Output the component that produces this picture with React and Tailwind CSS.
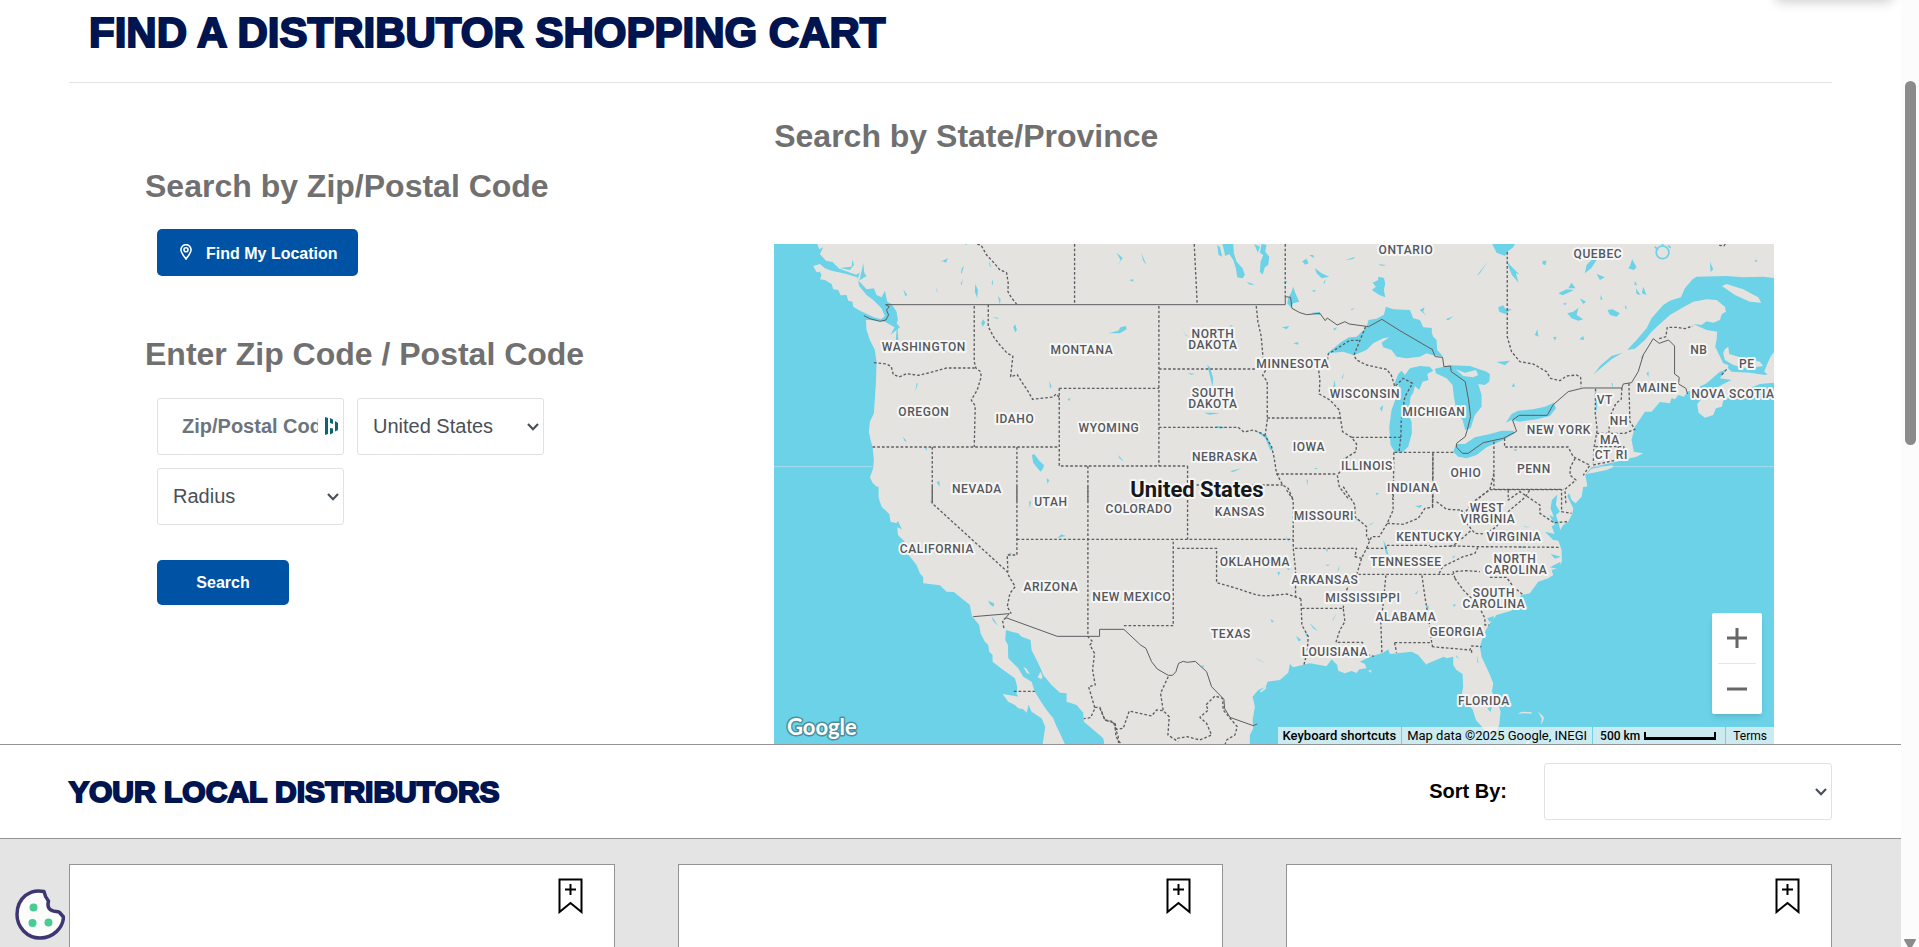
import React from 'react';

const WATER = '#6bd2e8';
const LAND = '#e4e3e0';

// Every tile of the map is drawn in its own local frame, three units to a pixel.
const tiles = [
  {
    x: 0,
    y: 0,
    water: [
      'M0,0 L142,0 142,12 148,28 160,22 150,42 168,62 188,66 208,86 258,104 270,98 262,120 272,128 290,148 312,145 320,165 335,172 345,152 352,185 365,192 380,215 384,240 380,250 390,262 383,268 386,303 378,300 380,270 362,284 374,262 345,245 300,240 288,240 290,270 300,300 315,330 320,368 318,430 312,520 300,545 297,575 302,600 308,621 312,660 310,685 300,712 308,728 325,745 326,790 0,790Z',
      'M210,84 L245,80 248,58 252,75 240,90Z',
      'M268,122 L276,90 280,68 283,98 290,108 276,116Z',
      'M510,66 L534,55 528,68 520,64Z M573,100 L576,84 582,78 576,100Z M572,132 L578,118 576,134Z M400,148 L412,165 406,168Z M498,143 L505,158 500,152Z M616,132 L624,150 622,175 615,155Z M657,62 L664,82 659,78Z M684,168 L692,178 690,194Z M634,248 L640,238 646,248 638,260Z M668,231 L688,234 680,236Z M730,262 L736,253 741,270 736,277Z M838,422 L845,440 840,445Z M893,477 L902,475 898,484Z M436,455 L440,430 444,430Z M400,590 L411,605 403,602Z M465,622 L472,622 469,632Z M786,646 L793,642 808,662 822,675 820,685 812,695 803,685 790,668Z M830,715 L838,720 833,732Z M500,727 L508,722 510,740Z M665,130 L669,118 669,136Z M586,12 L591,12 588,16Z',
    ],
    land: ['M130,78 L150,72 165,85 185,92 230,102 262,112 268,138 290,165 310,180 335,205 345,228 334,238 312,232 270,212 250,200 248,185 235,182 230,165 212,166 205,150 190,148 185,132 165,120 150,118 155,106 150,95 140,97Z'],
    solid: ['M347,194 H1546', 'M282,227 L300,236 330,244 348,240 356,225 350,210 358,200 347,194'],
    dashed: [
      'M914,12 V194',
      'M622,12 L634,16 650,45 672,68 690,90 710,98 715,130 714,155 724,172 740,192',
      'M613,198 V365 L618,384 632,395 634,410 622,450 604,480 616,498 613,621',
      'M312,368 L350,372 364,380 370,403 388,411 410,401 445,406 480,398 530,384 618,384',
      'M655,194 V260 L672,292 690,315 712,340 729,348 722,410 742,404 755,425 775,455 788,478 850,471 858,462 868,472',
      'M868,445 V678 H1253',
      'M868,445 H1167',
      'M308,621 H868',
      'M487,621 V790',
      'M741,621 V790',
      'M954,678 V790',
    ],
  },
  {
    x: 990,
    y: 0,
    water: [
      'M683,340 L725,305 748,292 770,290 800,262 806,240 830,236 852,224 858,200 880,208 930,210 940,235 960,240 970,262 996,264 994,290 1006,300 1000,320 1012,335 1006,348 980,340 960,350 920,355 890,350 875,330 850,322 845,308 868,292 850,295 820,310 800,330 762,346 730,335Z',
      'M880,440 L895,402 905,392 915,405 930,385 960,378 990,380 1000,392 982,402 986,420 968,425 958,450 945,438 940,458 932,470 930,490 922,515 935,545 936,580 925,620 905,640 885,637 872,615 868,560 875,510 888,475 898,450 895,430Z',
      'M368,12 L400,12 402,40 410,65 428,85 435,105 428,115 412,112 408,85 400,60 388,42 376,48Z M352,15 L360,22 367,50 356,45Z M463,12 L480,20 474,38Z M485,12 L500,15 496,35 508,50 505,75 495,82 488,104 480,95 482,65 490,45 480,38Z M440,125 L465,134 450,134Z',
      'M575,155 L580,140 586,158 598,185 580,190 572,202 562,190 565,175Z M818,128 L835,120 835,110 852,114 856,130 852,150 856,172 838,165 816,150 828,140Z M735,60 L768,50 758,58Z M645,85 L665,100 688,110 665,115 650,100Z M607,64 L620,56 626,70 616,74Z M628,45 L640,45 642,55Z M835,73 L860,75 845,78Z M960,210 L974,202 970,215 980,228Z M546,262 L568,258 560,268Z M580,310 L596,306 594,314Z M248,262 L254,282 268,290 256,286Z M52,78 L62,60 50,38 68,54Z M124,38 L140,76 130,62Z M88,120 L100,118 100,125Z M25,280 L55,272 62,262 78,258 80,268 60,280Z M322,375 L330,382 340,415 338,440 328,400Z M262,398 L285,402 275,404Z M312,518 L335,518 360,520 330,524Z M345,558 L380,562 362,566Z M390,694 L425,685 400,696Z M50,628 L55,645 72,665 58,655Z M700,445 L703,420 707,438Z M725,415 L732,398 729,415Z M840,505 L850,495 846,515Z M468,574 L500,586 518,628 512,632 496,594Z M638,540 L648,555Z M642,685 L655,684 648,688Z M620,718 L624,720 622,738Z M622,205 L636,218 660,216 662,226 640,222Z M550,128 L562,122 558,132Z M752,208 L766,204 756,210Z M635,152 L648,150 644,156Z M670,132 L676,118 676,128Z M700,266 L712,262 704,272Z M390,255 L400,258 392,260Z',
    ],
    land: [],
    solid: ['M556,194 V170 L572,172 576,205 600,218 620,224 660,220 676,242 682,234 712,255 735,245 748,252 806,260 846,238 900,272 996,328'],
    dashed: [
      'M283,12 L292,194',
      'M556,12 V170',
      'M177,198 V678',
      'M469,198 L474,245 484,290 490,360 498,390 488,405 502,425 502,540 496,585',
      'M177,387 H490',
      'M177,562 H415 L432,576 460,570 485,580 496,588 515,620 522,650 530,700 548,735 565,745 580,780',
      'M502,534 H722',
      'M263,678 V735 H548',
      'M530,702 H712',
      'M775,301 H750 L685,342 682,365 655,380 660,420 658,462 690,480 718,510 728,575 755,592 770,612 768,635 728,660 725,690 712,705 718,740 748,780',
      'M755,592 H903',
      'M797,260 L762,346 770,360 800,375 860,388 874,405 885,440 910,415 938,430 915,470 904,540 903,590 897,637',
      'M884,637 H1060',
      'M882,637 L880,780',
    ],
  },
  {
    x: 1980,
    y: 0,
    water: [
      'M1040,115 L1000,110 940,112 890,108 800,110 788,118 765,145 753,172 720,182 700,195 665,235 650,265 620,300 592,330 615,326 645,300 665,275 690,252 720,225 760,202 790,185 830,178 860,180 885,200 888,215 876,222 870,240 850,248 830,244 815,255 790,252 830,270 862,275 860,300 856,320 868,345 880,370 896,376 893,388 870,395 830,430 800,445 773,455 762,470 745,465 735,478 725,474 720,490 690,486 665,515 645,515 615,560 605,600 612,635 640,640 620,650 580,660 560,665 485,682 466,705 472,735 460,790 1040,790Z',
      'M15,386 L62,376 120,378 170,395 180,402 178,425 165,435 145,432 155,465 155,500 135,525 122,565 106,570 98,540 80,515 72,470 68,435 50,415 18,400Z',
      'M0,262 L10,290 20,300 22,330 40,350 10,345 0,330Z',
      'M228,548 L245,522 265,512 310,508 345,500 372,488 378,505 360,528 320,538 270,545 245,540Z',
      'M70,635 L78,612 105,612 135,592 180,582 215,572 250,572 255,580 220,600 170,622 140,645 110,655 85,650Z',
      'M490,405 L510,378 545,348 578,338 545,358 500,395Z M496,446 L503,470 501,520 496,480Z',
      'M187,12 L255,12 250,22 236,32 225,48 200,38Z M140,108 L174,64 150,100Z M228,60 L240,75 268,103 258,100 266,128 246,105Z M338,62 L350,62 346,76 338,72Z M465,100 L470,75 490,55 500,60 484,85Z M595,85 L600,78 607,58 620,82 612,90Z M533,210 L548,208 570,220 560,230 540,225Z M205,202 L220,196 226,206 245,208 225,222 208,215Z M412,220 L430,215 446,203 440,225 460,238 445,242 425,235Z M385,160 L410,148 432,150 415,158 398,166Z M500,102 L525,112 510,120Z M640,140 L650,165 636,160Z M618,145 L632,165 620,162Z M840,65 L850,88 842,96Z M448,298 L460,288 463,300Z M315,285 L322,268 326,290Z M370,292 L380,290 375,302Z M200,366 L240,362 225,376Z M245,440 L252,428 255,440Z M650,400 L656,394 656,412Z M633,352 L642,343 638,358Z M545,430 L549,430 547,446Z M415,145 L425,128 437,145Z M450,175 L468,185 460,192Z M48,238 L70,229 55,241Z M615,122 L622,136 614,134Z M585,195 L592,205 586,206Z M512,165 L518,178 512,180Z M250,628 L262,628 258,634Z M400,190 L412,190 404,196Z M975,58 L984,64 976,66Z',
    ],
    land: [
      'M893,383 L905,395 960,398 1005,405 1040,395 1040,428 990,432 940,452 900,468 880,482 876,500 858,505 850,525 825,533 806,518 802,492 820,470 850,450 880,432 905,420 870,415Z',
      'M1040,325 L1022,350 1012,372 1003,395 1015,405 1040,402Z',
      'M880,340 L885,328 895,320 898,342 930,352 990,365 1000,378 950,385 910,375 885,360Z',
      'M876,138 L890,132 940,148 985,172 994,188 960,185 915,165Z',
      'M470,702 L485,686 545,676 552,680 530,690 490,698Z',
      'M78,388 L105,398 138,390 145,405 130,412 100,408Z',
    ],
    solid: ['M6,326 L16,350 38,352 42,380 62,378 64,395 106,425 116,480 122,530 112,570 106,590 80,610 80,622 98,640 115,640 160,608 220,595 260,574 248,540 268,526 352,526 370,494 415,455 460,444 576,444 580,432 605,428 625,395 640,345 670,296 688,310 716,300 734,318 734,402 748,412 746,432 768,445 773,462'],
    dashed: [
      'M232,36 V290 L245,335 270,365 310,372 350,395 362,415 390,422 410,408 440,405 452,412 454,440',
      'M688,296 L708,290 712,262 740,262 765,266 788,258',
      'M890,388 L875,405',
      'M868,16 L882,18 886,12',
      'M497,446 L496,520 502,570 500,580 492,625 490,670',
      'M576,444 L574,478 558,490 540,530 537,578',
      'M500,580 H585 L615,568 600,545 597,430',
      'M496,620 H582 V632',
      'M565,620 V660 M490,675 L560,660',
      'M224,595 V621 H415 L430,650 480,676 460,706',
      'M436,655 L422,680 420,705 438,720 405,748 408,790',
      'M192,605 V748 H400',
      'M9,637 V780',
      'M192,700 L180,748 140,780',
    ],
  },
  {
    x: 0,
    y: 750,
    water: [
      'M0,-10 L326,-10 325,20 335,50 358,72 362,95 380,100 384,92 396,118 382,112 384,135 405,155 400,175 440,225 450,250 460,262 460,280 510,286 530,305 552,306 575,325 600,345 606,378 628,405 632,430 645,455 655,465 658,485 668,495 668,515 700,540 735,565 742,590 740,612 746,620 698,612 715,635 735,645 745,655 760,658 770,668 776,644 785,665 815,685 826,710 818,765 0,765Z',
      'M708,420 L725,425 745,430 755,440 782,450 785,480 800,510 812,535 820,555 845,585 870,608 890,610 890,635 920,645 940,668 942,695 965,715 1000,745 1002,765 886,765 870,730 858,705 850,685 830,660 810,630 795,605 785,575 760,560 745,535 715,505 714,465 706,450Z',
      'M654,332 L672,340 672,350 662,345Z M667,380 L684,407 676,400 668,390Z M480,32 L490,34 486,42Z M712,192 L727,188 720,196Z M862,145 L874,133 888,138 876,140Z M777,35 L783,33 780,55Z',
    ],
    land: ['M803,562 L812,545 818,560 814,568Z', 'M760,530 L770,536 780,553 770,548Z'],
    solid: ['M610,380 L718,371 708,383 862,439 H989 V418 H1062'],
    dashed: [
      'M487,-10 V40 L712,245 718,260 736,290 720,310 712,350 724,371',
      'M741,-10 V195 L712,195 714,245',
      'M741,148 H1570',
      'M954,-10 V440 L968,455 960,465 974,490 968,540 976,585 956,590 965,620 975,655 962,683 942,686',
      'M975,652 L990,652 1005,690 1030,695 1045,740 1046,765',
      'M732,604 H795',
      'M708,383 L698,392 702,415',
    ],
  },
  {
    x: 990,
    y: 750,
    water: [
      'M450,765 L450,735 460,715 458,690 465,650 458,620 475,600 498,590 503,575 540,570 565,548 570,522 580,532 630,520 680,529 695,508 712,525 715,542 735,550 755,543 770,549 778,538 800,535 795,522 780,515 810,500 850,488 865,478 870,492 935,485 955,495 980,525 1010,512 1060,500 1060,765Z',
      'M0,735 L12,752 12,765 0,765Z',
      'M764,82 L785,95 770,90Z M850,150 L858,165 866,195 858,190Z M806,104 L824,96 812,104Z M828,8 L838,10 830,16Z M945,48 L968,45 960,54Z M558,138 L570,156 562,150Z M532,246 L540,246 537,258Z M560,235 L572,236 566,240Z M650,248 L690,252 660,250Z M675,224 L690,224 684,228Z M712,245 L719,225 717,240Z M676,178 L684,178 682,186Z M588,437 L604,450 596,454Z M616,430 L624,432 620,440Z M628,398 L655,424 640,415Z M697,392 L709,370 702,388Z M512,388 L522,394 516,398Z M303,528 L312,526 310,534Z M945,312 L956,300 950,312Z M978,350 L986,346 986,358Z M462,502 L498,520 480,512Z',
    ],
    land: ['M478,606 L496,590 500,594 486,606Z', 'M804,542 L814,540 814,548Z'],
    solid: ['M72,418 L122,465 138,475 155,515 172,537 205,556 218,556 228,545 236,520 250,514 262,517 286,514 320,545 335,590 372,628 374,655 390,682 460,707 472,702'],
    dashed: [
      'M72,407 H220 V148',
      'M232,175 H350 V278 L410,295 470,315 500,318 560,312 603,326',
      'M263,30 V148',
      'M560,0 L580,30 580,175 587,240 587,322',
      'M585,175 H770 L765,200 785,205',
      'M603,326 L606,405 625,440 622,485 612,525',
      'M606,355 H730 L735,395 720,420 708,457 H788 L785,490 822,499',
      'M730,355 L735,310 750,280 770,255 785,205 800,175',
      'M800,175 H858 V166 H990',
      'M775,253 H1060',
      'M858,256 L850,340 843,400 846,490',
      'M966,256 L975,320 990,410 995,455 998,470',
      'M884,458 H990 M884,458 L890,488',
      'M730,-10 L765,45 765,80 800,110 800,140 812,155',
      'M800,175 L815,140 838,140 862,100 880,60 878,0',
      'M862,100 L910,103 955,85 975,55 998,52 999,-110',
      'M205,560 L182,610 190,662 208,680 204,735 235,755',
      'M0,655 L15,690 45,700 50,718 70,715 88,663 155,678 170,660 190,662',
      'M45,700 L48,740 65,765',
      'M232,745 L262,740 300,750 335,735 320,700 300,682 325,660 318,645 345,618 368,625 370,660 395,690 412,710 405,735 380,750 375,765',
    ],
  },
  {
    x: 1980,
    y: 750,
    water: [
      'M480,-10 L460,-10 455,20 437,40 425,30 418,10 412,18 430,55 428,70 415,95 400,105 388,125 385,150 395,180 396,215 385,235 365,240 370,255 355,265 325,275 300,310 275,315 250,345 245,362 200,375 180,400 168,420 158,445 150,470 155,500 178,550 190,580 186,605 205,640 212,665 208,705 200,722 184,730 184,765 1040,765 1040,-10Z',
      'M-10,522 L42,500 60,510 80,540 98,552 100,590 96,610 110,640 128,658 138,690 160,715 175,732 190,738 190,765 -10,765Z',
      'M366,30 L382,14 378,45 390,65 378,75 386,98 392,125 390,152 370,150 345,125 374,132 365,108 375,105 358,75 372,82 362,55Z',
      'M362,192 L393,200 375,206Z M360,232 L392,215 388,238Z M172,655 L186,650 182,666Z M78,495 L88,506 80,502Z M142,495 L146,520 142,515Z M66,202 L76,196 72,204Z M68,345 L78,342 74,350Z M270,168 L288,172 276,174Z M172,385 L192,378 190,392 178,395Z M276,108 L300,112 288,112Z',
    ],
    land: ['M264,672 L275,665 305,667 305,671 280,670Z', 'M324,664 L342,682 340,692 333,704 336,686Z', 'M284,765 L296,748 300,765Z'],
    solid: [],
    dashed: [
      'M0,170 L75,168 145,170 392,172',
      'M75,265 L70,245 110,242 150,245',
      'M75,265 L100,300 125,325 145,345 165,385 165,405 178,405',
      'M180,262 H230 L250,290 280,315',
      'M6,470 L120,480 125,468 155,470 M125,480 V490',
      'M28,250 L38,230 100,200 135,190 145,170',
      'M8,50 V0',
      'M20,35 L50,58 90,60 M95,60 L110,100 135,130 165,132 200,110 210,90 235,65 285,22 300,0',
      'M60,170 L80,160 125,120',
      'M100,75 L130,35 180,-1 H395 V65 L425,70',
      'M235,0 V30 L270,5 330,45 330,70 372,98 415,95',
    ],
  },
];

const labels = [
  ['WASHINGTON', 150, 103], ['OREGON', 150, 168], ['IDAHO', 241, 175], ['MONTANA', 308, 106],
  ['NEVADA', 203, 245], ['ONTARIO', 632, 6], ['NORTH', 439, 90], ['DAKOTA', 439, 101],
  ['MINNESOTA', 519, 120], ['SOUTH', 439, 149], ['DAKOTA', 439, 160], ['WISCONSIN', 591, 150],
  ['MICHIGAN', 660, 168], ['WYOMING', 335, 184], ['NEBRASKA', 451, 213], ['IOWA', 535, 203],
  ['ILLINOIS', 593, 222], ['INDIANA', 639, 244], ['QUEBEC', 824, 10], ['NB', 925, 106],
  ['PE', 973, 120], ['MAINE', 883, 144], ['VT', 831, 156], ['NOVA SCOTIA', 959, 150],
  ['NH', 845, 177], ['NEW YORK', 785, 186], ['MA', 836, 196], ['CT', 829, 211], ['RI', 848, 211],
  ['OHIO', 692, 229], ['PENN', 760, 225], ['UTAH', 277, 258], ['CALIFORNIA', 163, 305],
  ['ARIZONA', 277, 343], ['NEW MEXICO', 358, 353], ['COLORADO', 365, 265], ['KANSAS', 466, 268],
  ['MISSOURI', 550, 272], ['OKLAHOMA', 481, 318], ['ARKANSAS', 551, 336], ['MISSISSIPPI', 589, 354],
  ['TEXAS', 457, 390], ['LOUISIANA', 561, 408], ['ALABAMA', 632, 373], ['TENNESSEE', 632, 318],
  ['KENTUCKY', 655, 293], ['WEST', 713, 264], ['VIRGINIA', 714, 275], ['VIRGINIA', 740, 293],
  ['NORTH', 741, 315], ['CAROLINA', 742, 326], ['SOUTH', 720, 349], ['CAROLINA', 720, 360],
  ['GEORGIA', 683, 388], ['FLORIDA', 710, 457],
];

function MapDrawing() {
  return (
    <svg viewBox="0 0 1000 500" preserveAspectRatio="xMidYMid slice" className="block h-full w-full" role="img" aria-label="Map of the United States">
      <rect width="1000" height="500" fill={LAND} />
      <g transform="translate(-4 -4) scale(0.33333)" strokeLinejoin="round">
        {tiles.map((t, i) => (
          <g key={i} transform={`translate(${t.x} ${t.y})`}>
            {t.water.map((d) => <path key={d} d={d} fill={WATER} />)}
          </g>
        ))}
        <g fill="none" stroke={WATER} strokeWidth="5">
          <circle cx="2678" cy="37" r="19" />
          <path d="M2655,20 L2664,30 M2695,16 L2702,24 M2678,10 V18" />
        </g>
        <path d="M12,680 H310 M2470,680 H3012" stroke="#a9dbe6" strokeWidth="3" fill="none" />
        {tiles.map((t, i) => (
          <g key={i} transform={`translate(${t.x} ${t.y})`}>
            {t.land.map((d) => <path key={d} d={d} fill={LAND} />)}
            <g fill="none" stroke="#5c5d60">
              {t.solid.map((d) => <path key={d} d={d} strokeWidth="3" />)}
              {t.dashed.map((d) => <path key={d} d={d} strokeWidth="4" strokeDasharray="8 6" />)}
            </g>
          </g>
        ))}
      </g>
      <g textAnchor="middle" stroke="#f6f6f5" strokeLinejoin="round" paintOrder="stroke">
        {labels.map(([name, x, y]) => (
          <text key={`${name}${x}${y}`} x={x} y={y + 4} fill="#54575d" strokeWidth="4" className="font-['Roboto',sans-serif] text-[12px] font-medium tracking-wider">
            {name}
          </text>
        ))}
        <text x="423" y="253" fill="#17181b" strokeWidth="4" className="font-['Roboto',sans-serif] text-[22px] font-bold">United States</text>
      </g>
      <text x="13" y="491" fill="#fff" stroke="#4b8f9c" strokeWidth="3" strokeLinejoin="round" paintOrder="stroke" className="font-['Lato',sans-serif] text-[22px] font-bold">Google</text>
    </svg>
  );
}

function MapPanel() {
  return (
    <div className="relative h-[500px] overflow-hidden">
      <MapDrawing />
      <div className="absolute right-3 bottom-[30px] flex w-[50px] flex-col items-center rounded-xs bg-white shadow-md">
        <button type="button" aria-label="Zoom in" className="flex h-[50px] w-full items-center justify-center">
          <svg width="20" height="20" viewBox="0 0 20 20"><path d="M10,0V20M0,10H20" stroke="#666" strokeWidth="3" /></svg>
        </button>
        <span className="h-px w-[38px] bg-[#e6e6e6]" />
        <button type="button" aria-label="Zoom out" className="flex h-[50px] w-full items-center justify-center">
          <svg width="20" height="20" viewBox="0 0 20 20"><path d="M0,10H20" stroke="#666" strokeWidth="3" /></svg>
        </button>
      </div>
      <div className="absolute right-0 bottom-0 flex h-[17px] gap-px font-['Roboto',sans-serif] leading-[18px] whitespace-nowrap text-black">
        <button type="button" className="bg-[#f5f5f5]/70 px-[5px] text-[13px] font-medium">Keyboard shortcuts</button>
        <span className="bg-[#f5f5f5]/70 px-[5px] text-[13px]">Map data ©2025 Google, INEGI</span>
        <button type="button" className="flex items-center gap-1 bg-[#f5f5f5]/70 pr-[9px] pl-[7px] text-[12px] font-medium">
          500 km
          <span className="h-2 w-[72px] border-2 border-t-0 border-b-3 border-black" />
        </button>
        <a href="#terms" className="bg-[#f5f5f5]/70 px-[7px] text-[12px]">Terms</a>
      </div>
    </div>
  );
}

function SelectBox({ id, label, width, children }) {
  return (
    <div className={`relative ${width}`}>
      <select id={id} aria-label={label} className="h-[57px] w-full appearance-none rounded-[3px] border border-[#e1e1e1] bg-white pr-7 pb-0.5 pl-[15px] text-xl text-[#495057]">
        {children}
      </select>
      <svg width="12" height="8" viewBox="0 0 12 8" fill="none" stroke="#495057" strokeWidth="2.200" className="pointer-events-none absolute top-[25px] right-[5px]">
        <path d="M1,1L6,6.200L11,1" />
      </svg>
    </div>
  );
}

function Bookmark() {
  return (
    <svg width="25" height="36" viewBox="0 0 25 36" fill="none" stroke="#000" strokeWidth="2">
      <path d="M1.500,1.500H23.500V34L12.500,25L1.500,34Z" />
      <path d="M12.500,6V17M7,11.500H18" />
    </svg>
  );
}

function Cookie() {
  return (
    <svg width="50" height="51" viewBox="0 0 50 51">
      <path d="M29,2.500C15,-0.500 2,9 2,25.500C2,38 12,49 25,49C38,49 48,39 48.500,28L45,24C44,22 40,23 37,21.500C33,20 32.500,16 33.500,12C31,9 30,8 29,2.500Z" fill="#fcfcfc" stroke="#3c3673" strokeWidth="3.500" strokeLinejoin="round" />
      <circle cx="18.500" cy="18.500" r="4" fill="#45cd94" />
      <circle cx="17.500" cy="34" r="4" fill="#45cd94" />
      <circle cx="33.500" cy="33.500" r="4" fill="#45cd94" />
    </svg>
  );
}

export default function App() {
  return (
    <div className="relative flex h-screen overflow-hidden bg-white font-['Liberation_Sans',Arial,sans-serif]">
      <main className="flex min-w-0 flex-1 flex-col">
        <header className="mx-[69px] flex h-[83px] shrink-0 items-start border-b border-[#e4e4e4] pl-5">
          <h1 className="mt-3 text-[42px] leading-[42px] font-bold text-[#001450] uppercase [-webkit-text-stroke:2px_#001450]">Find a distributor shopping cart</h1>
        </header>

        <div className="mx-[69px] grid h-[661px] shrink-0 grid-cols-[2fr_3fr]">
          <section className="pt-[83px] pl-[76px]">
            <h2 className="text-[32px] leading-10 font-bold text-[#707070]">Search by Zip/Postal Code</h2>
            <button type="button" className="mt-[23px] ml-3 flex h-[47px] w-[201px] items-center rounded-[5px] bg-[#0052a5] pt-0.5 pl-[23px] text-base font-bold text-white">
              <svg width="12" height="16" viewBox="0 0 12 16" fill="none" stroke="#fff" strokeWidth="1.600" className="mr-[14px] mb-1">
                <path d="M6,15C3.500,11.500 0.900,9 0.900,5.800A5.100,5.100 0 0 1 11.100,5.800C11.100,9 8.500,11.500 6,15Z" />
                <circle cx="6" cy="5.800" r="2" />
              </svg>
              Find My Location
            </button>
            <h2 className="mt-[58px] text-[32px] leading-10 font-bold text-[#707070]">Enter Zip Code / Postal Code</h2>
            <form className="mt-6 ml-3" onSubmit={(e) => e.preventDefault()}>
              <div className="flex flex-wrap gap-[13px]">
                <div className="relative w-[187px]">
                  <input type="text" aria-label="Zip/Postal Code" placeholder="Zip/Postal Code" className="h-[57px] w-full rounded-[3px] border border-[#e1e1e1] bg-white pr-[25px] pl-6 text-xl font-bold text-[#495057] placeholder:text-[#6c757d]" />
                  <svg width="14" height="18" viewBox="0 0 14 18" fill="#0e6470" className="absolute top-[19px] right-[5px]">
                    <path d="M0,0L3,1V17L0,18ZM5,1L8,2.500V7L5,6ZM5,11L8,11.500V16L5,17.500ZM10,4L13,6V13L10,14.500Z" />
                  </svg>
                </div>
                <SelectBox id="country" label="Country" width="w-[187px]">
                  <option>United States</option>
                  <option>Canada</option>
                </SelectBox>
              </div>
              <div className="mt-[13px]">
                <SelectBox id="radius" label="Radius" width="w-[187px]">
                  <option>Radius</option>
                </SelectBox>
              </div>
              <button type="submit" className="mt-[35px] block h-[45px] w-[132px] rounded-[5px] bg-[#0052a5] text-base font-bold text-white">Search</button>
            </form>
          </section>

          <section className="flex flex-col justify-between pt-[33px] pr-[58px]">
            <h2 className="text-[32px] leading-10 font-bold text-[#707070]">Search by State/Province</h2>
            <MapPanel />
          </section>
        </div>

        <section className="flex h-[95px] shrink-0 items-center border-y border-[#949494] px-[69px]">
          <h2 className="flex-1 text-[30px] leading-8 font-bold text-[#001450] uppercase [-webkit-text-stroke:2px_#001450]">Your local distributors</h2>
          <label htmlFor="sort" className="mr-[37px] pb-0.5 text-xl font-bold text-black">Sort By:</label>
          <SelectBox id="sort" label="Sort By" width="w-[288px]">
            <option> </option>
          </SelectBox>
        </section>

        <section className="grid min-h-0 flex-1 grid-cols-3 gap-[63px] bg-[#e4e4e4] px-[69px] pt-[25px]">
          {[1, 2, 3].map((n) => (
            <article key={n} className="flex items-start justify-end border border-b-0 border-[#949494] bg-white pt-[13px] pr-[31px]">
              <button type="button" aria-label="Save distributor"><Bookmark /></button>
            </article>
          ))}
        </section>
      </main>

      <div className="flex w-[18px] shrink-0 flex-col items-center bg-[#fcfcfc] pt-[81px]">
        <div className="h-[364px] w-[11px] rounded-full bg-[#8b8b8b]" />
        <svg width="12" height="8" viewBox="0 0 12 8" className="mt-auto"><path d="M0,1Q0,0 1,0H11Q12,0 12,1L8,8H4Z" fill="#8b8b8b" /></svg>
      </div>

      <div className="absolute -top-10 right-[26px] h-10 w-[118px] rounded-md bg-white shadow-[0_2px_12px_rgba(0,0,0,0.2)]" />
      <button type="button" aria-label="Cookie settings" className="absolute bottom-[7px] left-[15px]"><Cookie /></button>
    </div>
  );
}
